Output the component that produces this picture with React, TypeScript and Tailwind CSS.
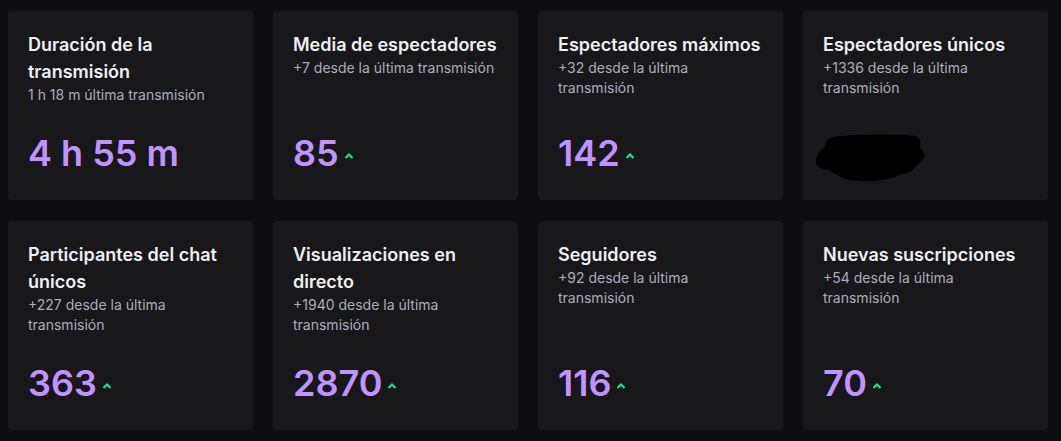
import React from 'react';

type Stat = {
  title: string;
  sub: string;
  value: string;
  arrow?: boolean;
  hidden?: boolean;
};

const stats: Stat[] = [
  { title: 'Duración de la transmisión', sub: '1 h 18 m última transmisión', value: '4 h 55 m' },
  { title: 'Media de espectadores', sub: '+7 desde la última transmisión', value: '85', arrow: true },
  { title: 'Espectadores máximos', sub: '+32 desde la última transmisión', value: '142', arrow: true },
  { title: 'Espectadores únicos', sub: '+1336 desde la última transmisión', value: '', hidden: true },
  { title: 'Participantes del chat únicos', sub: '+227 desde la última transmisión', value: '363', arrow: true },
  { title: 'Visualizaciones en directo', sub: '+1940 desde la última transmisión', value: '2870', arrow: true },
  { title: 'Seguidores', sub: '+92 desde la última transmisión', value: '116', arrow: true },
  { title: 'Nuevas suscripciones', sub: '+54 desde la última transmisión', value: '70', arrow: true },
];

const UpArrow = () => (
  <svg width="10" height="8" viewBox="0 0 10 8" className="ml-[5px] mt-[6px]">
    <polyline points="1.5,6 5,2.5 8.5,6" fill="none" stroke="#00f593" strokeWidth="2" />
  </svg>
);

// scribbled-out value on the "únicos" card
const Blob = () => (
  <svg width="112" height="50" viewBox="0 0 112 50" className="-ml-[8px] mt-[12px]">
    <path
      d="M18 3 C 40 0, 80 0, 100 2 C 106 3, 106 8, 105 14 C 110 17, 111 24, 106 28 C 100 33, 98 38, 88 40 C 72 46, 58 48, 46 47 C 34 47, 26 44, 14 36 C 4 35, 0 32, 1 26 C 2 20, 6 15, 10 13 C 10 8, 13 4, 18 3 Z"
      fill="#000"
    />
  </svg>
);

const StatCard = ({ s }: { s: Stat }) => (
  <div className="flex flex-col rounded bg-[#18181b] px-5 pt-5 pb-[27px]">
    <h3 className="text-[18px] font-semibold leading-[27px] text-[#efeff1]">{s.title}</h3>
    <p className="text-[14px] leading-5 text-[#adadb8]">{s.sub}</p>
    <div className="mt-auto flex items-center pt-7">
      {s.hidden ? (
        <div className="flex h-10 items-center">
          <Blob />
        </div>
      ) : (
        <>
          <span className="text-4xl leading-10 font-semibold text-[#bf94ff]">{s.value}</span>
          {s.arrow && <UpArrow />}
        </>
      )}
    </div>
  </div>
);

export default function App() {
  return (
    <div
      className="min-h-[441px] w-full bg-[#0e0e10] pt-[11px] pl-2"
      style={{ fontFamily: 'Inter, "Noto Sans", sans-serif' }}
    >
      <div className="grid w-[1040px] grid-cols-4 gap-x-5 gap-y-[21px]">
        {stats.map((s, i) => (
          <StatCard key={i} s={s} />
        ))}
      </div>
    </div>
  );
}
